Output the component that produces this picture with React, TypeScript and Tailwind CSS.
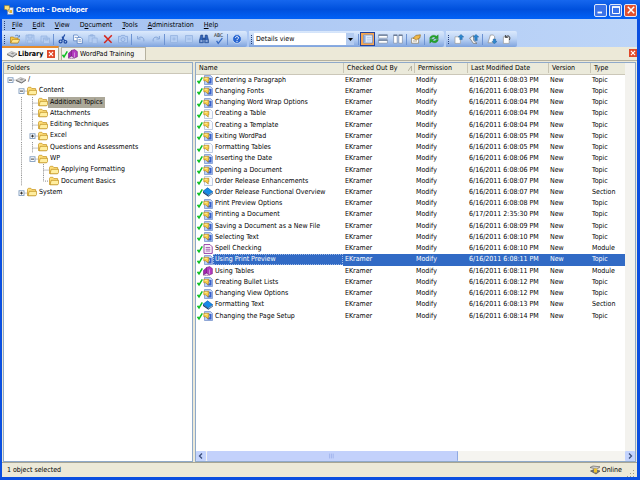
import type { ReactNode } from "react";

type DocIcon = "topic" | "blank" | "section" | "page" | "module";

const documents: [DocIcon, string, string, string][] = [
  ["topic", "Centering a Paragraph", "6/16/2011 6:08:03 PM", "Topic"],
  ["topic", "Changing Fonts", "6/16/2011 6:08:03 PM", "Topic"],
  ["topic", "Changing Word Wrap Options", "6/16/2011 6:08:04 PM", "Topic"],
  ["blank", "Creating a Table", "6/16/2011 6:08:04 PM", "Topic"],
  ["blank", "Creating a Template", "6/16/2011 6:08:04 PM", "Topic"],
  ["topic", "Exiting WordPad", "6/16/2011 6:08:05 PM", "Topic"],
  ["blank", "Formatting Tables", "6/16/2011 6:08:05 PM", "Topic"],
  ["topic", "Inserting the Date", "6/16/2011 6:08:06 PM", "Topic"],
  ["topic", "Opening a Document", "6/16/2011 6:08:06 PM", "Topic"],
  ["blank", "Order Release Enhancements", "6/16/2011 6:08:07 PM", "Topic"],
  ["section", "Order Release Functional Overview", "6/16/2011 6:08:07 PM", "Section"],
  ["topic", "Print Preview Options", "6/16/2011 6:08:08 PM", "Topic"],
  ["topic", "Printing a Document", "6/17/2011 2:35:30 PM", "Topic"],
  ["topic", "Saving a Document as a New File", "6/16/2011 6:08:09 PM", "Topic"],
  ["topic", "Selecting Text", "6/16/2011 6:08:10 PM", "Topic"],
  ["page", "Spell Checking", "6/16/2011 6:08:10 PM", "Module"],
  ["topic", "Using Print Preview", "6/16/2011 6:08:11 PM", "Topic"],
  ["module", "Using Tables", "6/16/2011 6:08:11 PM", "Module"],
  ["topic", "Creating Bullet Lists", "6/16/2011 6:08:12 PM", "Topic"],
  ["topic", "Changing View Options", "6/16/2011 6:08:12 PM", "Topic"],
  ["section", "Formatting Text", "6/16/2011 6:08:13 PM", "Section"],
  ["topic", "Changing the Page Setup", "6/16/2011 6:08:14 PM", "Topic"],
];

// Each guide character is one indent cell: "|" line, "t" tee, "l" last child,
// "-" open box, "+" closed box, "." empty.
const folders: { guides: string; label: string; selected?: boolean }[] = [
  { guides: "-", label: "/" },
  { guides: ".-", label: "Content" },
  { guides: ".|t", label: "Additional Topics", selected: true },
  { guides: ".|t", label: "Attachments" },
  { guides: ".|t", label: "Editing Techniques" },
  { guides: ".|+", label: "Excel" },
  { guides: ".|t", label: "Questions and Assessments" },
  { guides: ".|-", label: "WP" },
  { guides: ".|.t", label: "Applying Formatting" },
  { guides: ".|.l", label: "Document Basics" },
  { guides: ".+", label: "System" },
];

const menus: [string, string, string][] = [
  ["", "F", "ile"],
  ["", "E", "dit"],
  ["", "V", "iew"],
  ["D", "o", "cument"],
  ["", "T", "ools"],
  ["", "A", "dministration"],
  ["", "H", "elp"],
];

function Icon({ children, className = "h-[10px] w-[10px]" }: { children: ReactNode; className?: string }) {
  return (
    <svg viewBox="0 0 10 10" className={`block shrink-0 ${className}`} aria-hidden="true">
      {children}
    </svg>
  );
}

function Check() {
  return (
    <svg viewBox="0 0 6 10" className="block h-[10px] w-[6px] shrink-0" aria-hidden="true">
      <path d="M.5 5.8 2 7.800 5.300 2.300" fill="none" stroke="#0cc022" strokeWidth="1.5" />
    </svg>
  );
}

function Disk({ className = "h-[10px] w-[10px]" }: { className?: string }) {
  return (
    <Icon className={className}>
      <path d="M0 5 4.5 2.5 10 4.6 5.5 7.6Z" fill="#d5d5d5" stroke="#888" strokeWidth=".5" />
      <path d="M0 5 5.5 7.6 10 4.6V5.6L5.5 8.6 0 6Z" fill="#6a6a6a" />
      <path d="m3.5 4.4 2-.8 2 .8-2 1.1Z" fill="#999" />
    </Icon>
  );
}

function Folder() {
  return (
    <Icon>
      <path d="M.5 8.5V2.2L1.3 1.3h2.6l.9 1.2h3.8v6Z" fill="#ffdf7a" stroke="#c4921c" strokeWidth=".7" />
      <path d="M1 8.800 2.200 4.300h7.400v3.300L8.600 8.800Z" fill="#ffeea0" stroke="#b98712" strokeWidth=".7" />
    </Icon>
  );
}

function DocumentIcon({ kind }: { kind: DocIcon }) {
  if (kind === "section")
    return (
      <Icon>
        <path d="M0 4.2 4.6.8 9.8 4.8 5.4 8.2Z" fill="#168be8" stroke="#0753a5" strokeWidth=".6" />
        <path d="M0 4.4 5.4 8.4 9.8 5v1.6L5.4 9.8 0 6Z" fill="#123d70" />
        <path d="m5.6 8.6 3.8-2.9" stroke="#fff" strokeWidth=".6" />
      </Icon>
    );
  if (kind === "module")
    return (
      <Icon>
        <path d="M.4 4.4 3.600 1.400v5.800L.4 9Z" fill="#a024b0" stroke="#64106c" strokeWidth=".5" />
        <path d="m3.600 1.400 3-.8 2.800 2v5.200L6.400 9 3.600 7.200Z" fill="#b43cc0" stroke="#64106c" strokeWidth=".5" />
        <path d="M.4 9 3.600 7.200 6.400 9 3.400 9.800Z" fill="#e9d4ee" stroke="#64106c" strokeWidth=".4" />
        <path d="M6.500 3.500v4.800" stroke="#e8c8ee" strokeWidth=".6" />
      </Icon>
    );
  if (kind === "page")
    return (
      <Icon>
        <path d="M1 .6h6L9.2 2.8v6.600H1Z" fill="#fff" stroke="#8a2c9a" strokeWidth=".9" />
        <path d="M2.6 3.400h4.600M2.6 5.200h4.800M2.6 7h4.800" stroke="#8a2c9a" strokeWidth=".8" />
      </Icon>
    );
  const filled = kind === "topic";
  return (
    <Icon>
      <path d="M1.500.5h6l2 2v7h-8Z" fill={filled ? "#bcd0f4" : "#f6f9ff"} stroke={filled ? "#6d8bc8" : "#a3b7d6"} strokeWidth=".7" />
      {filled && <path d="M6 3h2.500v5.500H4.500V7.300L7 6Z" fill="#3a62cc" />}
      <path d="M.8 2.300h5v3.500H5l.3 2.200-2.700-2.200H.8Z" fill="#fbd04e" stroke="#a9790f" strokeWidth=".6" />
      <path d="M1.600 3.300h2.600" stroke="#fff3b8" strokeWidth=".8" />
    </Icon>
  );
}

function Guide({ kind }: { kind: string }) {
  const boxed = kind === "-" || kind === "+";
  return (
    <svg viewBox="0 0 11 12" className="block h-full w-[11px] shrink-0" preserveAspectRatio="none" aria-hidden="true">
      {kind !== "." && (
        <path
          d={kind === "|" ? "M5.5 0v12" : kind === "t" ? "M5.5 0v12M5.5 6.5h6" : kind === "l" ? "M5.5 0v6.5h6" : "M5.5 6.5h6"}
          fill="none"
          stroke="#888"
          strokeDasharray="1 1"
        />
      )}
      {boxed && (
        <>
          <rect x="3" y="4" width="5" height="5" fill="#fff" stroke="#7b98bb" strokeWidth=".9" />
          <path d={kind === "+" ? "M4 6.5h3M5.5 5v3" : "M4 6.5h3"} stroke="#222" strokeWidth=".9" />
        </>
      )}
    </svg>
  );
}

const toolIcons: Record<string, ReactNode> = {
  Open: (
    <>
      <path d="M.5 8.8V3h3l1 1h3.5v4.800Z" fill="#f5c84c" stroke="#a87508" strokeWidth=".6" />
      <path d="M.7 9 2.6 5.400h7.200L8 9Z" fill="#ffe48d" stroke="#a87508" strokeWidth=".6" />
      <path d="M5 2.200C6 .8 8 .8 8.800 2.400M9.400 1v2H7.600" fill="none" stroke="#3a6eb5" strokeWidth=".7" />
    </>
  ),
  Save: (
    <g fill="#b4cdf2" stroke="#94b2e0" strokeWidth=".7">
      <path d="M1 1h8v8H1Z" />
      <path d="M3 1h4v3H3ZM2.6 6h4.800v3H2.6Z" />
    </g>
  ),
  "Save all": (
    <g fill="#b4cdf2" stroke="#94b2e0" strokeWidth=".7">
      <path d="M1 2h6v6H1Z" />
      <path d="M3.5 4h6v5.5h-6ZM5 4v2h3V4" />
    </g>
  ),
  Cut: (
    <g fill="none" stroke="#1d49a3" strokeWidth="1.2">
      <path d="M6.800.5 3.800 6.400M4 2.600 6.800 7" />
      <ellipse cx="2.6" cy="7.4" rx="1.5" ry="1.4" />
      <ellipse cx="7.4" cy="7.8" rx="1.4" ry="1.3" />
    </g>
  ),
  Copy: (
    <g fill="#fff" stroke="#4673b9" strokeWidth=".7">
      <path d="M.6 1h3.600l1.400 1.400v4.400h-5Z" />
      <path d="M4.200 3.400h3.600l1.600 1.600v4.400H4.200Z" />
      <path d="M5.400 5.600h2.400M5.400 7.200h3M1.800 3.400h2" />
    </g>
  ),
  Paste: (
    <g fill="#b4cdf2" stroke="#94b2e0" strokeWidth=".7">
      <path d="M.8 1.500h6v7.200h-6ZM2.500.7h2.600v1.400H2.500Z" />
      <path d="M4.200 4h5v5.400h-5Z" />
    </g>
  ),
  Delete: <path d="m1.200 1.400 7.400 7.400M8.800 1.200 1.200 9" stroke="#d5261c" strokeWidth="1.5" />,
  Camera: (
    <g fill="#b4cdf2" stroke="#86a6da" strokeWidth=".8">
      <path d="M.5 2.400h2.200l.6-1h3.400l.6 1h2.200v6.400h-9Z" />
      <circle cx="5" cy="5.6" r="2" />
    </g>
  ),
  Undo: <path d="M1.600 2v3h3M1.800 4.800C4 1.600 8.800 3.200 7.800 7.400" fill="none" stroke="#86a6d8" strokeWidth="1" />,
  Redo: <path d="M8.400 2v3h-3M8.200 4.800C6 1.600 1.200 3.200 2.200 7.400" fill="none" stroke="#86a6d8" strokeWidth="1" />,
  Expand: <path d="M1.500 1.500h7v7h-7ZM3.400 5h3.200M5 3.400v3.200" fill="#b4cdf2" stroke="#94b2e0" strokeWidth=".8" />,
  Collapse: <path d="M1.500 1.500h7v7h-7ZM3.400 5h3.200" fill="#b4cdf2" stroke="#94b2e0" strokeWidth=".8" />,
  Find: (
    <g fill="#3565b8" stroke="#153b7c" strokeWidth=".5">
      <path d="M1.800 1h2v2.400l.6 5.400H.5V6ZM6.200 1h2L9.500 6v2.800H5.600L6 3.400Z" />
      <path d="M4 4h2v1.600H4Z" />
      <path d="M1.400 7h2M6.600 7h2" stroke="#fff" strokeWidth=".9" />
    </g>
  ),
  Spelling: <path d="m2 4.800 2 3.200L9.200 1.500" fill="none" stroke="#3468c0" strokeWidth="1.5" />,
  Help: (
    <>
      <circle cx="5" cy="5" r="4.4" fill="#2765d1" stroke="#cfe0f7" strokeWidth=".8" />
      <path d="M3.400 3.800c.2-1.600 3.200-1.600 3.100.1C6.400 5 5 5 5 6.200M5 7v1" fill="none" stroke="#fff" strokeWidth="1" />
    </>
  ),
  "Single pane": (
    <>
      <path d="M.6 1h8.800v8H.6Z" fill="#e4edfc" stroke="#6d8fc9" strokeWidth=".8" />
      <path d="M1 1.400h1.600v7.200H1Z" fill="#8fade0" />
      <path d="M3.800 3.400h4.600M3.800 5.200h4.600M3.800 7h4.600" stroke="#a9bedf" strokeWidth=".7" />
    </>
  ),
  "Split horizontally": (
    <>
      <path d="M.6.8h8.800v3.400H.6ZM.6 5.800h8.800v3.400H.6Z" fill="#fff" stroke="#7b8da8" strokeWidth=".7" />
      <path d="M.6 1.200h8.800M.6 6.200h8.800" stroke="#4f6484" />
    </>
  ),
  "Split vertically": (
    <>
      <path d="M.6.8h3.600v8.400H.6ZM5.800.8h3.600v8.400H5.800Z" fill="#fff" stroke="#7b8da8" strokeWidth=".7" />
      <path d="M.6 1.300h3.600M5.800 1.300h3.600" stroke="#4f6484" />
    </>
  ),
  Properties: (
    <>
      <path d="M.6 4h7v5.200h-7Z" fill="#fff" stroke="#8a7b5c" strokeWidth=".7" />
      <path d="m2 4.400 2.800-3L9.400.8 8.800 4 5.400 5.800Z" fill="#f0b849" stroke="#8b6115" strokeWidth=".6" />
      <path d="M2 7h4" stroke="#8a7b5c" strokeWidth=".7" />
    </>
  ),
  Refresh: (
    <g fill="#25a52b" stroke="#116f18" strokeWidth=".3">
      <path d="M.6 4.600C1 1.400 5 .1 7.400 2.200L9.200.8v4H5l1.200-1.200C4.800 2.600 3 3.200 2.600 4.600Z" />
      <path d="M9.400 5.400C9 8.600 5 9.900 2.600 7.800L.8 9.200v-4H5L3.800 6.400c1.400 1 3.200.4 3.600-1Z" />
    </g>
  ),
  "Check in": (
    <>
      <path d="M1 2.800h5.400v6.600H1Z" fill="#fff" stroke="#9b9b9b" strokeWidth=".7" />
      <path d="M7 .4 9.800 3H8.200v2.600H5.800V3H4.200Z" fill="#2c87cf" stroke="#13568f" strokeWidth=".4" />
    </>
  ),
  "Check in all": (
    <>
      <path d="m.6 4 4-2.600v5L8 9.400H4.400Z" fill="#f5f5f5" stroke="#6b6b6b" strokeWidth=".7" />
      <path d="M7 .4 9.800 3H8.200v3.600H5.800V3H4.200Z" fill="#2c87cf" stroke="#13568f" strokeWidth=".4" />
    </>
  ),
  "Check out": (
    <>
      <path d="M1 8.800 3.400 1h2.800l1.400 1.400v6.400Z" fill="#fff" stroke="#8b8b8b" strokeWidth=".7" />
      <path d="M7.400 9.800 4.800 7.400h1.400V5h2.400v2.400H10Z" fill="#2c87cf" stroke="#13568f" strokeWidth=".4" />
    </>
  ),
  "Undo check out": (
    <>
      <path d="M1.400 2.800h5.800v6.600H1.400Z" fill="#fff" stroke="#9b9b9b" strokeWidth=".7" />
      <path d="M3.400 1v2.400h2.400M3.800 3C6 .4 9 2.600 7.400 6" fill="none" stroke="#333" strokeWidth=".9" />
    </>
  ),
};

function Tool({ name, active }: { name: string; active?: boolean }) {
  return (
    <button
      type="button"
      aria-label={name}
      className={`flex h-[14px] w-[15px] shrink-0 flex-col items-center justify-center ${
        active ? "border border-[#26439b] bg-[#f6a650]" : ""
      }`}
    >
      {name === "Spelling" ? (
        <>
          <span className="h-[4px] text-[5px] leading-[4px] text-[#222]">ABC</span>
          <Icon className="h-[8px] w-[10px]">{toolIcons[name]}</Icon>
        </>
      ) : (
        <Icon>{toolIcons[name]}</Icon>
      )}
    </button>
  );
}

function Sep() {
  return <span className="mx-px h-[11px] w-px shrink-0 bg-[#6d93d2]" />;
}

function Grip() {
  return <span className="mx-[2px] h-[9px] w-px shrink-0 border-l border-dotted border-[#27417c]" />;
}

function Band({ children }: { children: ReactNode }) {
  return (
    <div className="flex h-[16px] items-center rounded-r-[2px] bg-gradient-to-b from-[#dbe9fc] via-[#b9d1f4] to-[#7fa3dd] pr-[3px]">
      <Grip />
      {children}
    </div>
  );
}

function CloseButton({ label }: { label: string }) {
  return (
    <button type="button" aria-label={label} className="h-[8px] w-[8px] shrink-0 bg-[#e0492a]">
      <Icon className="h-[8px] w-[8px]">
        <path d="m2.400 2.400 5.200 5.200M7.600 2.400 2.400 7.600" stroke="#fff" strokeWidth="1.4" />
      </Icon>
    </button>
  );
}

function TitleBar() {
  const frame = "flex h-[13px] w-[13px] items-center justify-center rounded-[2px] border border-[#dfe9fb]";
  return (
    <header className="flex h-[19px] shrink-0 items-center bg-gradient-to-b from-[#1667ee] via-[#0050dd] to-[#0262f7] pt-px pr-[3px] pl-[4px]">
      <Icon>
        <path d="M3.500 2.500h5.800v7H3.500Z" fill="#e9eef8" stroke="#6580ae" strokeWidth=".6" />
        <path d="M.4.6h5v4H4l.6 1.800-2.400-1.800H.4Z" fill="#ffe27a" stroke="#8d6a12" strokeWidth=".5" />
        <path d="M5.400 5h2.600v3H5.400Z" fill="#e2b12e" />
      </Icon>
      <h1 className="ml-[2px] grow font-[Roboto,sans-serif] text-[8px] leading-[12px] font-bold text-white">
        Content - Developer
      </h1>
      <div className="flex gap-[2px]">
        <button type="button" aria-label="Minimize" className={`${frame} bg-[#3a72e8]`}>
          <Icon>
            <path d="M1.500 7.500h4.500" stroke="#fff" strokeWidth="1.8" />
          </Icon>
        </button>
        <button type="button" aria-label="Maximize" className={`${frame} bg-[#3a72e8]`}>
          <Icon>
            <path d="M1.500 2h7v6.500h-7Z" fill="none" stroke="#fff" />
            <path d="M1 2h8" stroke="#fff" strokeWidth="1.6" />
          </Icon>
        </button>
        <button type="button" aria-label="Close" className={`${frame} bg-[#e2512e]`}>
          <Icon>
            <path d="m1.800 1.800 6.400 6.400M8.200 1.800 1.800 8.200" stroke="#fff" strokeWidth="1.5" />
          </Icon>
        </button>
      </div>
    </header>
  );
}

function Toolbars() {
  return (
    <div className="flex h-[16px] shrink-0 gap-[2px]">
      <Band>
        {["Open", "Save", "Save all"].map((n) => <Tool key={n} name={n} />)}
        <Sep />
        {["Cut", "Copy", "Paste", "Delete", "Camera"].map((n) => <Tool key={n} name={n} />)}
        <Sep />
        {["Undo", "Redo"].map((n) => <Tool key={n} name={n} />)}
        <Sep />
        {["Expand", "Collapse", "Find", "Spelling"].map((n) => <Tool key={n} name={n} />)}
        <Sep />
        <Tool name="Help" />
      </Band>
      <Band>
        <div className="relative mr-[3px] h-[12px] w-[100px]">
          <select aria-label="View" className="block h-full w-full appearance-none bg-white pl-[2px] leading-[12px]">
            <option>Details view</option>
          </select>
          <span className="pointer-events-none absolute top-0 right-0 flex h-[12px] w-[8px] items-center justify-center bg-[#b3cbf0]">
            <svg viewBox="0 0 5 3" className="h-[3px] w-[5px]" aria-hidden="true">
              <path d="M0 0h5L2.500 3Z" />
            </svg>
          </span>
        </div>
        <Sep />
        <Tool name="Single pane" active />
        <Tool name="Split horizontally" />
        <Tool name="Split vertically" />
        <Sep />
        <Tool name="Properties" />
        <Sep />
        <Tool name="Refresh" />
      </Band>
      <Band>
        <Tool name="Check in" />
        <Tool name="Check in all" />
        <Sep />
        <Tool name="Check out" />
        <Tool name="Undo check out" />
      </Band>
    </div>
  );
}

function FolderPane() {
  return (
    <aside className="flex w-[190px] shrink-0 flex-col border border-[#8fa9c9] bg-white">
      <h2 className="h-[11px] shrink-0 border-b border-[#cbc7b8] bg-[#ebeadb] pl-[3px] leading-[10px]">Folders</h2>
      <ul className="grid h-[124px] auto-rows-fr">
        {folders.map(({ guides, label, selected }) => (
          <li key={label} className="flex min-h-0 items-center pl-px">
            {guides.split("").map((g, i) => (
              <Guide key={i} kind={g} />
            ))}
            {label === "/" ? <Disk /> : <Folder />}
            <button type="button" className={`h-full px-[2px] leading-[11px] ${selected ? "bg-[#aca899]" : ""}`}>
              {label}
            </button>
          </li>
        ))}
      </ul>
    </aside>
  );
}

function DocumentList() {
  const headings = ["Name", "Checked Out By", "Permission", "Last Modified Date", "Version", "Type"];
  return (
    <section className="flex min-w-0 grow flex-col border border-[#8fa9c9] bg-white">
      <div className="flex grow">
        <div className="min-w-0 grow">
          <table className="h-[259px] w-full table-fixed border-collapse text-left whitespace-nowrap">
            <colgroup>
              <col className="w-[147px]" />
              <col className="w-[71px]" />
              <col className="w-[53px]" />
              <col className="w-[81px]" />
              <col className="w-[42px]" />
              <col />
            </colgroup>
            <thead>
              <tr className="h-[11px] bg-[#ebeadb]">
                {headings.map((h, i) => (
                  <th key={h} scope="col" className="h-[11px] border-b border-[#cbc7b8] p-0 leading-[10px] font-normal">
                    <div className={`flex items-center ${i ? "border-l border-[#c9c5b4] pl-[3px]" : "pl-[3px]"}`}>
                      {h}
                      {i === 1 && (
                        <svg viewBox="0 0 4 5" className="mr-[2px] ml-auto h-[5px] w-[4px]" aria-hidden="true">
                          <path d="M0 5 3.500 0V5" fill="none" stroke="#aaa693" strokeWidth=".8" />
                        </svg>
                      )}
                    </div>
                  </th>
                ))}
              </tr>
            </thead>
            <tbody>
              {documents.map(([icon, name, date, type]) => {
                const selected = name === "Using Print Preview";
                const cell = selected ? "bg-[#316ac5] p-0 pl-[2px] text-white" : "p-0 pl-[2px]";
                return (
                  <tr key={name} className="leading-[11px]">
                    <td className="p-0 pl-px">
                      <div className="flex items-center">
                        <Check />
                        <DocumentIcon kind={icon} />
                        <span
                          className={`grow pl-[2px] ${
                            selected ? "bg-[#316ac5] text-white outline outline-dotted -outline-offset-1 outline-[#9fb9e4]" : ""
                          }`}
                        >
                          {name}
                        </span>
                      </div>
                    </td>
                    <td className={cell}>EKramer</td>
                    <td className={cell}>Modify</td>
                    <td className={cell}>{date}</td>
                    <td className={cell}>New</td>
                    <td className={cell}>{type}</td>
                  </tr>
                );
              })}
            </tbody>
          </table>
        </div>
        <div className="w-[10px] shrink-0 bg-[#f3f2ee]" />
      </div>
      <div className="flex h-[10px] shrink-0 bg-[#f5f4f0]">
        <button type="button" aria-label="Scroll left" className="h-[10px] w-[10px] rounded-[1px] bg-[#c3d3fd]">
          <Icon>
            <path d="M6 2.500 3.500 5 6 7.500" fill="none" stroke="#3b4f7d" strokeWidth="1.300" />
          </Icon>
        </button>
        <div className="ml-px grow">
          <div className="flex h-[10px] w-3/5 items-center justify-center rounded-[1px] border-r border-[#8fa9e2] bg-[#c3d1fb]">
            <Icon className="h-[6px] w-[8px]">
              <path d="M1 1v8M4 1v8M7 1v8" stroke="#8ba3e4" />
            </Icon>
          </div>
        </div>
        <button type="button" aria-label="Scroll right" className="h-[10px] w-[10px] rounded-[1px] bg-[#c3d3fd]">
          <Icon>
            <path d="M4 2.500 6.500 5 4 7.500" fill="none" stroke="#3b4f7d" strokeWidth="1.300" />
          </Icon>
        </button>
      </div>
    </section>
  );
}

export default function App() {
  return (
    <div className="flex min-h-screen flex-col bg-[#0b4fe0] font-['DejaVu_Sans_Condensed','DejaVu_Sans',sans-serif] text-[7px] text-black">
      <TitleBar />
      <div className="mr-[3px] mb-[3px] ml-[2px] flex grow flex-col bg-[#ece9d8]">
        <div className="bg-gradient-to-r from-[#a3c0f0] to-[#bdd5f8]">
          <nav className="flex h-[12px] items-center">
            <Grip />
            {menus.map(([before, key, after]) => (
              <button key={key + after} type="button" className="px-[5px] leading-[11px]">
                {before}
                <u>{key}</u>
                {after}
              </button>
            ))}
          </nav>
          <Toolbars />
        </div>

        <div className="flex h-[14px] shrink-0 items-end border-b border-[#b5b19f]">
          <div className="flex h-[14px] w-[57px] items-center border-t-2 border-r border-[#e68b2c] border-r-[#a9a592] bg-[#fbfaf6] pl-[5px]">
            <Disk />
            <button type="button" className="ml-px grow text-left font-bold">Library</button>
            <CloseButton label="Close Library" />
            <span className="w-[3px]" />
          </div>
          <button type="button" className="ml-[2px] flex h-[13px] items-center border border-b-0 border-[#b5b19f] bg-[#f4f3ec] pr-[11px]">
            <Check />
            <DocumentIcon kind="module" />
            <span className="ml-[2px]">WordPad Training</span>
          </button>
          <div className="mb-[3px] ml-auto flex">
            <CloseButton label="Close tab" />
          </div>
        </div>

        <main className="flex grow gap-[2px] px-px pt-px">
          <FolderPane />
          <DocumentList />
        </main>

        <footer className="flex h-[15px] shrink-0 items-center border-t border-[#a7a594] pr-[2px] pl-[5px]">
          <span className="grow">1 object selected</span>
          <Icon>
            <path d="M0 2.500 3 1l7 .8-3 2.400Z" fill="#ccc" stroke="#555" strokeWidth=".6" />
            <path d="M.5 6 4 4.500 10 6 6 9Z" fill="#777" stroke="#333" strokeWidth=".5" />
            <path d="M4 3.500h3V7.500H4Z" fill="#f0c32c" />
          </Icon>
          <span className="ml-[2px]">Online</span>
          <svg viewBox="0 0 8 8" className="ml-[5px] h-[8px] w-[8px] self-end" aria-hidden="true">
            <path d="M6 1h1v1H6ZM3 4h1v1H3ZM6 4h1v1H6ZM0 7h1v1H0ZM3 7h1v1H3ZM6 7h1v1H6Z" fill="#9d9a87" />
          </svg>
        </footer>
      </div>
    </div>
  );
}
